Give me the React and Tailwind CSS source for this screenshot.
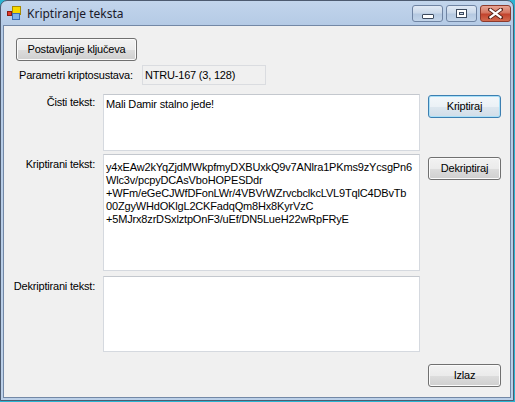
const font = { fontFamily: '"Liberation Sans", Arial, sans-serif' }

const btnBase =
  "h-[23px] rounded-[3px] border text-[11px] text-black flex items-center justify-center leading-none"
const btnGray =
  "border-[#707070] bg-[linear-gradient(to_bottom,#f2f2f2_0%,#ebebeb_50%,#dddddd_51%,#cfcfcf_100%)] shadow-[inset_0_0_0_1px_#fbfbfb]"
const btnDefault =
  "border-[#3c7fb1] bg-[linear-gradient(to_bottom,#f3f7fa_0%,#ebf1f6_50%,#dde7ef_51%,#d1dde8_100%)] shadow-[inset_0_0_0_1px_#a9e0f8]"

const Field = ({ h, children }) => (
  <div
    className={`w-[317px] ${h} bg-white border border-[#d5d9df] border-t-[#c4c8ce] px-[2px] pt-[3px] text-[11px] leading-[13px] tracking-[-0.17px] text-black overflow-hidden`}
  >
    {children}
  </div>
)

const cipher = [
  "y4xEAw2kYqZjdMWkpfmyDXBUxkQ9v7ANlra1PKms9zYcsgPn6",
  "Wlc3v/pcpyDCAsVboHOPESDdr",
  "+WFm/eGeCJWfDFonLWr/4VBVrWZrvcbclkcLVL9TqlC4DBvTb",
  "00ZgyWHdOKlgL2CKFadqQm8Hx8KyrVzC",
  "+5MJrx8zrDSxlztpOnF3/uEf/DN5LueH22wRpFRyE",
]

const AppIcon = () => (
  <svg width="16" height="16" viewBox="0 0 16 16">
    <rect x="6.5" y="1.5" width="8" height="8" fill="#f5d800" stroke="#a88a00" />
    <rect x="6.5" y="8.5" width="7" height="6" fill="#7fb2ea" stroke="#3a6db5" />
    <rect x="1.5" y="6.5" width="4" height="4" fill="#e23a2a" stroke="#8a1c10" />
  </svg>
)

const CaptionButton = ({ kind }) => {
  const red = kind === "close"
  return (
    <div
      className={`w-[31px] h-[17px] rounded-[3px] border flex items-center justify-center ${
        red
          ? "border-[#8d3a2c] bg-[linear-gradient(to_bottom,#e8a493_0%,#d47560_45%,#c2432d_55%,#d36b4f_100%)]"
          : "border-[#6f84a3] bg-[linear-gradient(to_bottom,#e1eaf5_0%,#cbd9ea_45%,#b5c9e1_55%,#c3d5ea_100%)]"
      }`}
    >
      {kind === "min" && (
        <div className="w-[12px] h-[5px] mt-[5px] bg-white border border-[#3c4a5e] rounded-[1px]" />
      )}
      {kind === "max" && (
        <div className="w-[11px] h-[9px] border border-[#3c4a5e] bg-white flex items-center justify-center">
          <div className="w-[5px] h-[3px] border border-[#3c4a5e] bg-[#c9d7e8]" />
        </div>
      )}
      {kind === "close" && (
        <svg width="15" height="11" viewBox="0 0 15 11">
          <path d="M2 1.5 L13 9.5 M13 1.5 L2 9.5" stroke="#5a2318" strokeWidth="4" strokeLinecap="square" />
          <path d="M2.5 1.8 L12.5 9.2 M12.5 1.8 L2.5 9.2" stroke="#ffffff" strokeWidth="2.2" strokeLinecap="square" />
        </svg>
      )}
    </div>
  )
}

export default function App() {
  return (
    <div className="w-[515px] h-[402px] bg-[#2bb4d2] pr-[1px] pb-[1px]" style={font}>
      <div className="w-[514px] h-[401px] rounded-t-[7px] border border-[#4d5b70] bg-[linear-gradient(to_bottom,#c2d5ec_0px,#b4cae5_25px,#bcd0e8_100%)] flex flex-col">
        <div className="h-[24px] flex items-center pl-[5px] pr-[2px] shrink-0">
          <AppIcon />
          <span
            className="ml-[5px] text-[12px] text-[#1a1a2a] pt-[1px]"
            style={{ fontFamily: '"Noto Sans", "Open Sans", sans-serif' }}
          >
            Kriptiranje teksta
          </span>
          <div className="ml-auto flex gap-[3px] self-start mt-[4px]">
            <CaptionButton kind="min" />
            <CaptionButton kind="max" />
            <CaptionButton kind="close" />
          </div>
        </div>
        <div className="flex-1 mx-[2px] mb-[2px] border border-[#7388a6] bg-[#f0f0f0] pt-[12px] tracking-[-0.2px]">
          <button className={`${btnBase} ${btnGray} ml-[12px] w-[121px]`}>Postavljanje ključeva</button>

          <div className="flex items-center mt-[4px] h-[20px]">
            <span className="w-[138px] pl-[15px] text-[11px] text-black">Parametri kriptosustava:</span>
            <div className="w-[124px] h-[20px] border border-[#dadce0] bg-[#f0f0f0] pl-[2px] text-[11px] text-black flex items-center">
              NTRU-167 (3, 128)
            </div>
          </div>

          <div className="flex mt-[9px]">
            <span className="w-[91px] text-right text-[11px] text-black pt-[2px] leading-[13px]">Čisti tekst:</span>
            <div className="ml-[8px]">
              <Field h="h-[57px]">Mali Damir stalno jede!</Field>
            </div>
            <button className={`${btnBase} ${btnDefault} ml-[8px] mt-[1px] w-[73px]`}>Kriptiraj</button>
          </div>

          <div className="flex mt-[3px]">
            <span className="w-[91px] text-right text-[11px] text-black pt-[4px] leading-[13px]">Kriptirani tekst:</span>
            <div className="ml-[8px]">
              <Field h="h-[117px]">
                <div className="pt-[3px]">
                  {cipher.map((l) => (
                    <div key={l} className="whitespace-nowrap">
                      {l}
                    </div>
                  ))}
                </div>
              </Field>
            </div>
            <button className={`${btnBase} ${btnGray} ml-[8px] mt-[3px] w-[73px]`}>Dekriptiraj</button>
          </div>

          <div className="flex mt-[5px]">
            <span className="w-[91px] text-right text-[11px] text-black pt-[4px] leading-[13px]">Dekriptirani tekst:</span>
            <div className="ml-[8px]">
              <Field h="h-[76px]" />
            </div>
          </div>

          <div className="flex justify-end mt-[12px] pr-[9px]">
            <button className={`${btnBase} ${btnGray} w-[73px]`}>Izlaz</button>
          </div>
        </div>
      </div>
    </div>
  )
}
